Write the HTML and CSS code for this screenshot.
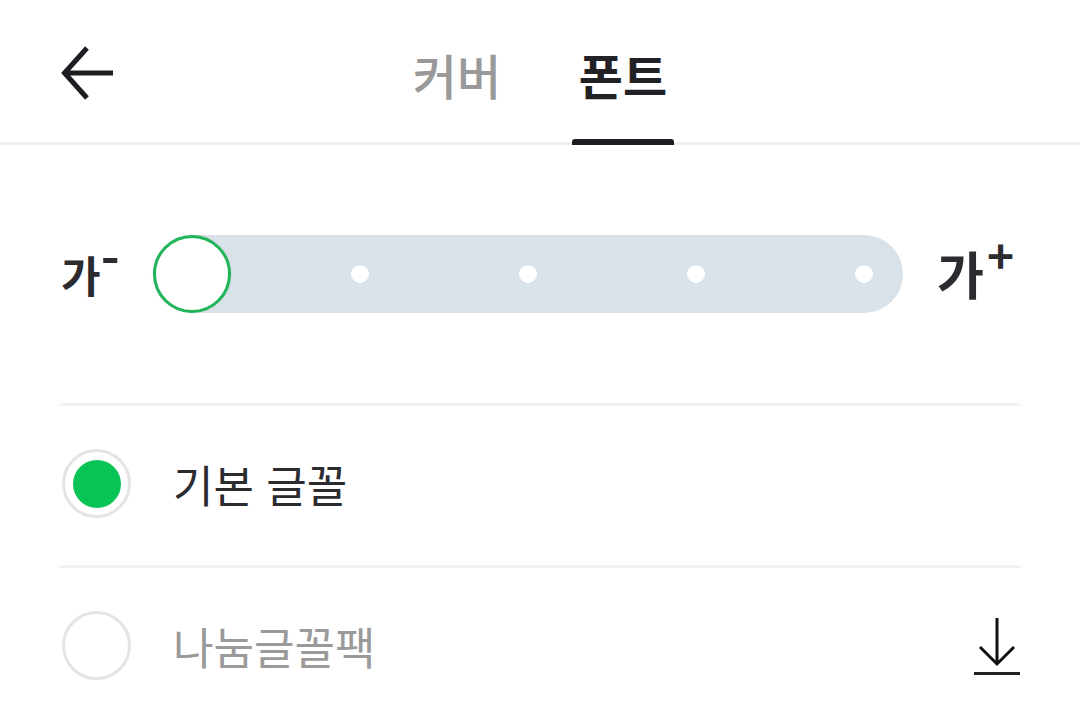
FILE: index.html
```html
<!DOCTYPE html>
<html lang="ko">
<head>
<meta charset="utf-8">
<link rel="stylesheet" href="styles.css">
</head>
<body>
<header class="topbar">
  <div class="back-cell">
    <svg class="back-icon" viewBox="0 0 54 54" width="54" height="54">
      <path d="M52 27H4M26 2L3.5 27L26 52" fill="none" stroke="#1e1e22" stroke-width="5" stroke-linecap="butt" stroke-linejoin="miter"/>
    </svg>
  </div>
  <nav class="tabs">
    <div class="tab">커버</div>
    <div class="tab active">폰트</div>
  </nav>
  <div></div>
</header>
<main class="content">
  <section class="size-row">
    <div class="size-label small">가<span class="sup">-</span></div>
    <div class="track">
      <span class="dot"></span>
      <span class="dot"></span>
      <span class="dot"></span>
      <span class="dot"></span>
      <span class="dot"></span>
      <span class="thumb"></span>
    </div>
    <div class="size-label large">가<span class="sup">+</span></div>
  </section>
  <ul class="font-list">
    <li class="font-item selected">
      <span class="radio"><span class="radio-dot"></span></span>
      <span class="font-name">기본 글꼴</span>
    </li>
    <li class="font-item disabled">
      <span class="radio"></span>
      <span class="font-name">나눔글꼴팩</span>
      <svg class="download" viewBox="0 0 46 60" width="46" height="60">
        <path d="M23 2V48M6 31L23 48L40 31" fill="none" stroke="#111" stroke-width="3"/>
        <path d="M0 57.5H46" stroke="#222" stroke-width="3"/>
      </svg>
    </li>
  </ul>
</main>
</body>
</html>
```
FILE: styles.css
```css
* { box-sizing: border-box; }
html, body {
  margin: 0;
  padding: 0;
  background: #fff;
}
body {
  width: 1080px;
  height: 726px;
  overflow: hidden;
  font-family: "Noto Sans CJK KR", "Noto Sans", sans-serif;
  color: #2b2b30;
}
.topbar {
  display: grid;
  grid-template-columns: 1fr auto 1fr;
  height: 145px;
  border-bottom: 3px solid #efefef;
}
.back-cell {
  display: flex;
  align-items: center;
  padding-left: 61px;
}
.back-icon { display: block; margin-top: 4px; }
.tabs {
  display: flex;
  gap: 64px;
}
.tab {
  position: relative;
  width: 102px;
  display: flex;
  justify-content: center;
  align-items: center;
  padding-top: 6px;
  font-size: 48px;
  line-height: 1;
  font-weight: 500;
  color: #999999;
}
.tab.active {
  color: #222226;
  font-weight: 700;
}
.tab.active::after {
  content: "";
  position: absolute;
  left: 0;
  right: 0;
  bottom: -3px;
  height: 6px;
  background: #1d1d21;
  border-radius: 3px 3px 0 0;
}
.content {
  padding: 0 60px;
}
.size-row {
  display: flex;
  align-items: center;
  height: 78px;
  margin-top: 90px;
  padding-left: 1px;
}
.size-label {
  font-weight: 700;
  color: #2b2b30;
  line-height: 1;
  white-space: nowrap;
}
.size-label.small {
  width: 92px;
  font-size: 43px;
}
.size-label.large {
  margin-left: 34px;
  font-size: 51px;
  margin-top: -2px;
}
.sup {
  display: inline-block;
  vertical-align: top;
  font-weight: 700;
  line-height: 1;
}
.small .sup {
  font-size: 34px;
  margin-left: 3px;
  margin-top: -11px;
  transform: scale(1.5, 1.4);
}
.large .sup {
  font-size: 46px;
  margin-left: 3px;
  margin-top: -17px;
}
.track {
  position: relative;
  width: 750px;
  height: 78px;
  border-radius: 39px;
  background: #d9e1e9;
  display: flex;
  align-items: center;
  justify-content: space-between;
  padding: 0 30px;
}
.dot {
  width: 18px;
  height: 18px;
  border-radius: 50%;
  background: #fff;
}
.thumb {
  position: absolute;
  left: 0;
  top: 0;
  width: 78px;
  height: 78px;
  border-radius: 50%;
  background: #fff;
  border: 3px solid #20b559;
  box-shadow: 0 0 3px rgba(0,0,0,0.08);
}
.font-list {
  list-style: none;
  margin: 90px 0 0;
  padding: 0;
}
.font-item {
  display: flex;
  align-items: center;
  height: 162px;
  border-top: 3px solid #f2f2f2;
  padding-left: 2px;
  padding-bottom: 4px;
}
.radio {
  width: 69px;
  height: 69px;
  border-radius: 50%;
  border: 3px solid #e4e4e8;
  display: flex;
  align-items: center;
  justify-content: center;
  flex-shrink: 0;
}
.radio-dot {
  width: 48px;
  height: 48px;
  border-radius: 50%;
  background: #08c457;
}
.font-name {
  margin-left: 42px;
  font-size: 44px;
  line-height: 1;
  color: #2b2b30;
}
.disabled .font-name { color: #9a9a9a; }
.download {
  display: block;
  margin-left: auto;
  margin-top: 0;
}
```
